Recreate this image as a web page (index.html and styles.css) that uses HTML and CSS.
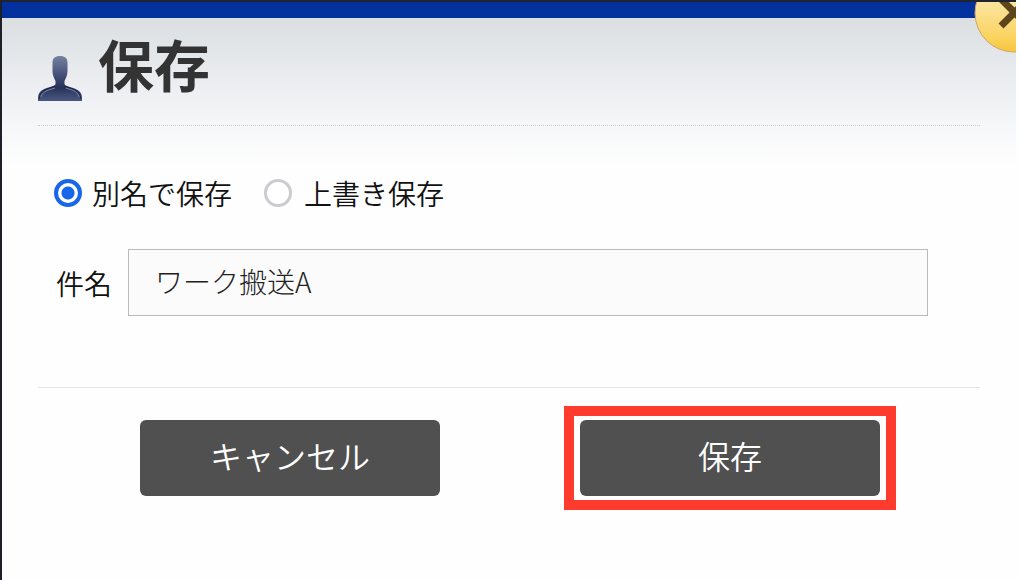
FILE: index.html
```html
<!DOCTYPE html>
<html lang="ja">
<head>
<meta charset="utf-8">
<meta name="viewport" content="width=device-width, initial-scale=1">
<title>保存</title>
<link rel="stylesheet" href="styles.css">
</head>
<body>
<main class="dialog">
  <button class="close" type="button" aria-label="閉じる">
    <svg viewBox="0 0 80 80" width="80" height="80" aria-hidden="true">
      <defs>
        <linearGradient id="gold" x1="0" y1="0" x2="0" y2="1">
          <stop offset="0" stop-color="#fff3c0"/>
          <stop offset=".5" stop-color="#fbdf8e"/>
          <stop offset=".8" stop-color="#fbd460"/>
          <stop offset="1" stop-color="#f8c53e"/>
        </linearGradient>
      </defs>
      <circle cx="40" cy="40" r="39" fill="url(#gold)" stroke="#c9a768"/>
      <path d="M27 26 L54 53 M54 26 L27 53" fill="none" stroke="#5c451a" stroke-width="7"/>
    </svg>
  </button>
  <header class="head">
    <svg class="person" viewBox="0 0 44 46" width="44" height="46" aria-hidden="true">
      <defs>
        <linearGradient id="navy" x1="0" y1="0" x2="0" y2="1">
          <stop offset="0" stop-color="#7682a3"/>
          <stop offset=".4" stop-color="#47537a"/>
          <stop offset=".7" stop-color="#26325a"/>
          <stop offset="1" stop-color="#4a587f"/>
        </linearGradient>
      </defs>
      <path d="M22 1C17 1 14.500 3 14.500 8v8c0 4 1.500 7 3 10v3c0 3-11 3-15.500 8-2 2-2 5-2 9h44c0-4 0-7-2-9-4.500-5-15.500-5-15.500-8v-3c1.500-3 3-6 3-10V8c0-5-2.500-7-7.500-7z" fill="url(#navy)"/>
      <path d="M1 44c0-9 10-10 16-13M43 44c0-9-10-10-16-13" fill="none" stroke="#1c2547"/>
      <path d="M3 42c2-7 9-7 14-9M41 42c-2-7-8-7-13-9" fill="none" stroke="#7a85a8"/>
    </svg>
    <h1 class="title">保存</h1>
  </header>
  <form class="form">
    <div class="choices">
      <label class="choice"><input class="radio" type="radio" name="mode" checked>別名で保存</label>
      <label class="choice"><input class="radio" type="radio" name="mode">上書き保存</label>
    </div>
    <div class="field">
      <label class="field-label" for="subject">件名</label>
      <input class="text" id="subject" type="text" value="ワーク搬送A">
    </div>
    <div class="actions">
      <div class="slot"><button class="button" type="button">キャンセル</button></div>
      <div class="slot marked"><button class="button" type="submit">保存</button></div>
    </div>
  </form>
</main>
</body>
</html>
```
FILE: styles.css
```css
* { box-sizing: border-box; }

body {
  margin: 0;
  background: #fefefe;
  color: #111;
  font: 350 28px/40px "Noto Sans CJK JP", sans-serif;
}

.dialog {
  position: relative;
  overflow: hidden;
  min-height: 100vh;
  margin-right: 4px;
  padding: 16px 36px 0;
  border-top: 2px solid #20242e;
  border-left: 2px solid #1f1f27;
  background:
    linear-gradient(#02309c, #02309c) 0 0 / 100% 16px no-repeat,
    linear-gradient(#dbdfe2 16px, #eceef1 84px, #f6f7f9 124px, #fefefe 164px);
}

.close {
  position: absolute;
  top: -29px;
  right: -38px;
  width: 80px;
  height: 80px;
  padding: 0;
  border: 0;
  border-radius: 50%;
  background: none;
}

.close svg { display: block; }

.head {
  display: flex;
  align-items: flex-end;
  gap: 16px;
  height: 108px;
  padding-bottom: 24px;
  border-bottom: 1px dotted #cdd0d3;
}

.title {
  margin: 0 0 8px;
  color: #333;
  font-size: 56px;
  line-height: 60px;
  font-weight: 700;
}

.choices {
  display: flex;
  gap: 32px;
  padding: 47px 0 0 16px;
}

.choice {
  display: flex;
  align-items: center;
  gap: 10px;
}

.choice + .choice { gap: 12px; }

.radio {
  appearance: none;
  width: 28px;
  height: 28px;
  margin: 0;
  border: 3px solid #cbcbd0;
  border-radius: 50%;
  background: #fff;
}

.radio:checked {
  border: 4px solid #1767e8;
  background: radial-gradient(circle, #1767e8 6px, #fff 7px);
}

.field {
  display: flex;
  align-items: center;
  gap: 16px;
  padding: 36px 52px 0 18px;
}

.field-label { flex: none; }

.text {
  flex: 1;
  min-width: 0;
  height: 67px;
  padding: 0 26px 4px;
  border: 1px solid #bababa;
  border-radius: 0;
  background: #fbfbfb;
  color: #222;
  font: inherit;
  font-weight: 300;
}

.actions {
  display: grid;
  grid-template-columns: 1fr 1fr;
  margin-top: 71px;
  padding: 18px 60px 0 62px;
  border-top: 1px solid #e6e6e6;
}

.slot {
  justify-self: center;
  width: 332px;
  max-width: 100%;
  padding: 4px 6px;
  border: 10px solid transparent;
}

.slot:first-child { justify-self: start; margin-left: 24px; }

.slot:last-child { justify-self: end; margin-right: 24px; }

.marked {
  border-color: #fe3b2d;
  background: #fff;
}

.button {
  display: block;
  width: 100%;
  height: 76px;
  padding: 0 0 6px;
  border: 0;
  border-radius: 6px;
  background: #505050;
  color: #fff;
  font: inherit;
  font-size: 32px;
}
```
